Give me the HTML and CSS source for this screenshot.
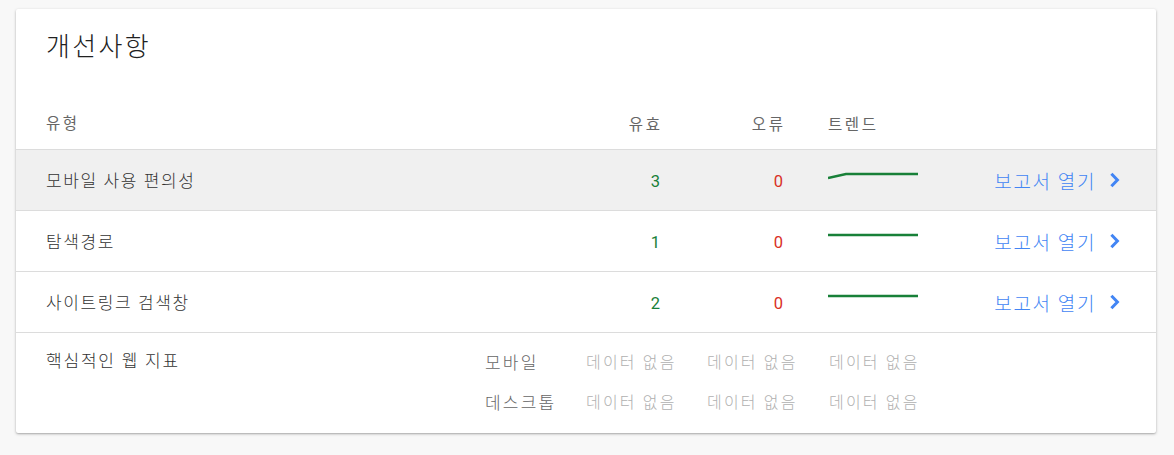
FILE: index.html
```html
<!DOCTYPE html>
<html lang="ko">
<head>
<meta charset="utf-8">
<link rel="stylesheet" href="styles.css">
</head>
<body>
<div class="card">
  <h1 class="title">개선사항</h1>
  <div class="grid head">
    <div class="c-name">유형</div>
    <div class="c-num">유효</div>
    <div class="c-num">오류</div>
    <div class="c-trend">트렌드</div>
    <div></div>
  </div>
  <div class="grid row hl">
    <div class="c-name">모바일 사용 편의성</div>
    <div class="c-num ok">3</div>
    <div class="c-num err">0</div>
    <div class="c-trend"><svg width="90" height="20" viewBox="0 0 90 20"><polyline points="0,8 18,4 90,4" fill="none" stroke="#188038" stroke-width="2.5"/></svg></div>
    <div class="c-link"><span>보고서 열기</span><svg width="24" height="24" viewBox="0 0 24 24"><polyline points="9.4,5.8 15.4,12 9.4,18.2" fill="none" stroke="#4285f4" stroke-width="3"/></svg></div>
  </div>
  <div class="grid row">
    <div class="c-name">탐색경로</div>
    <div class="c-num ok">1</div>
    <div class="c-num err">0</div>
    <div class="c-trend"><svg width="90" height="20" viewBox="0 0 90 20"><polyline points="0,4 90,4" fill="none" stroke="#188038" stroke-width="2.5"/></svg></div>
    <div class="c-link"><span>보고서 열기</span><svg width="24" height="24" viewBox="0 0 24 24"><polyline points="9.4,5.8 15.4,12 9.4,18.2" fill="none" stroke="#4285f4" stroke-width="3"/></svg></div>
  </div>
  <div class="grid row">
    <div class="c-name">사이트링크 검색창</div>
    <div class="c-num ok">2</div>
    <div class="c-num err">0</div>
    <div class="c-trend"><svg width="90" height="20" viewBox="0 0 90 20"><polyline points="0,4 90,4" fill="none" stroke="#188038" stroke-width="2.5"/></svg></div>
    <div class="c-link"><span>보고서 열기</span><svg width="24" height="24" viewBox="0 0 24 24"><polyline points="9.4,5.8 15.4,12 9.4,18.2" fill="none" stroke="#4285f4" stroke-width="3"/></svg></div>
  </div>
  <div class="vitals">
    <div class="v-name">핵심적인 웹 지표</div>
    <div class="v-grid">
      <div class="v-label">모바일</div>
      <div class="v-none">데이터 없음</div>
      <div class="v-none">데이터 없음</div>
      <div class="v-none">데이터 없음</div>
      <div class="v-label">데스크톱</div>
      <div class="v-none">데이터 없음</div>
      <div class="v-none">데이터 없음</div>
      <div class="v-none">데이터 없음</div>
    </div>
  </div>
</div>
</body>
</html>
```

FILE: styles.css
```css
html, body {
  margin: 0;
  padding: 0;
}
body {
  background: #f8f8f8;
  font-family: "Roboto", "Noto Sans CJK KR", sans-serif;
  font-weight: 300;
  color: #333333;
  width: 1174px;
  height: 455px;
  overflow: hidden;
}
.card {
  margin: 9px 18px 0 16px;
  background: #ffffff;
  box-shadow: 0 1px 3px rgba(0, 0, 0, 0.28), 0 1px 1px rgba(0, 0, 0, 0.08);
  border-radius: 2px;
}
.title {
  margin: 0;
  padding: 21px 30px 0;
  height: 67px;
  font-size: 26px;
  line-height: 34px;
  font-weight: 300;
  letter-spacing: 2.3px;
  color: #212121;
}
.grid {
  display: grid;
  grid-template-columns: 514px 100px 123px 167px 176px;
  align-items: center;
  padding: 0 30px;
  border-bottom: 1px solid #dcdcdc;
}
.head {
  height: 52px;
  font-size: 15.5px;
  letter-spacing: 2.6px;
  color: #666666;
  font-weight: 400;
}
.row {
  height: 60px;
  font-size: 17px;
  letter-spacing: 1.6px;
}
.row.hl {
  background: #f0f0f0;
}
.c-name {
  padding-bottom: 2px;
}
.c-num {
  text-align: right;
  letter-spacing: 0;
}
.head .c-num {
  letter-spacing: 2.6px;
  margin-right: -2.6px;
}
.row .c-num {
  padding-top: 3px;
  font-weight: 400;
  font-size: 16.5px;
}
.ok { color: #188038; }
.err { color: #d93025; }
.c-trend {
  padding-left: 45px;
  display: flex;
  align-items: center;
}
.c-link {
  display: flex;
  justify-content: flex-end;
  align-items: center;
  gap: 6px;
  color: #4285f4;
  font-size: 19px;
  letter-spacing: 1.6px;
}
.c-link svg {
  display: block;
}
.vitals {
  display: flex;
  padding: 8px 30px 12px;
  font-size: 16px;
  letter-spacing: 2.2px;
}
.v-name {
  width: 439px;
  line-height: 40px;
  color: #333333;
  font-size: 17px;
  letter-spacing: 1.8px;
}
.v-grid {
  display: grid;
  grid-template-columns: 101px 121px 122px 122px;
  grid-auto-rows: 40px;
  align-items: center;
}
.v-label {
  color: #666666;
  font-size: 17px;
  letter-spacing: 2.2px;
}
.v-none {
  color: #b0b0b0;
}
```
